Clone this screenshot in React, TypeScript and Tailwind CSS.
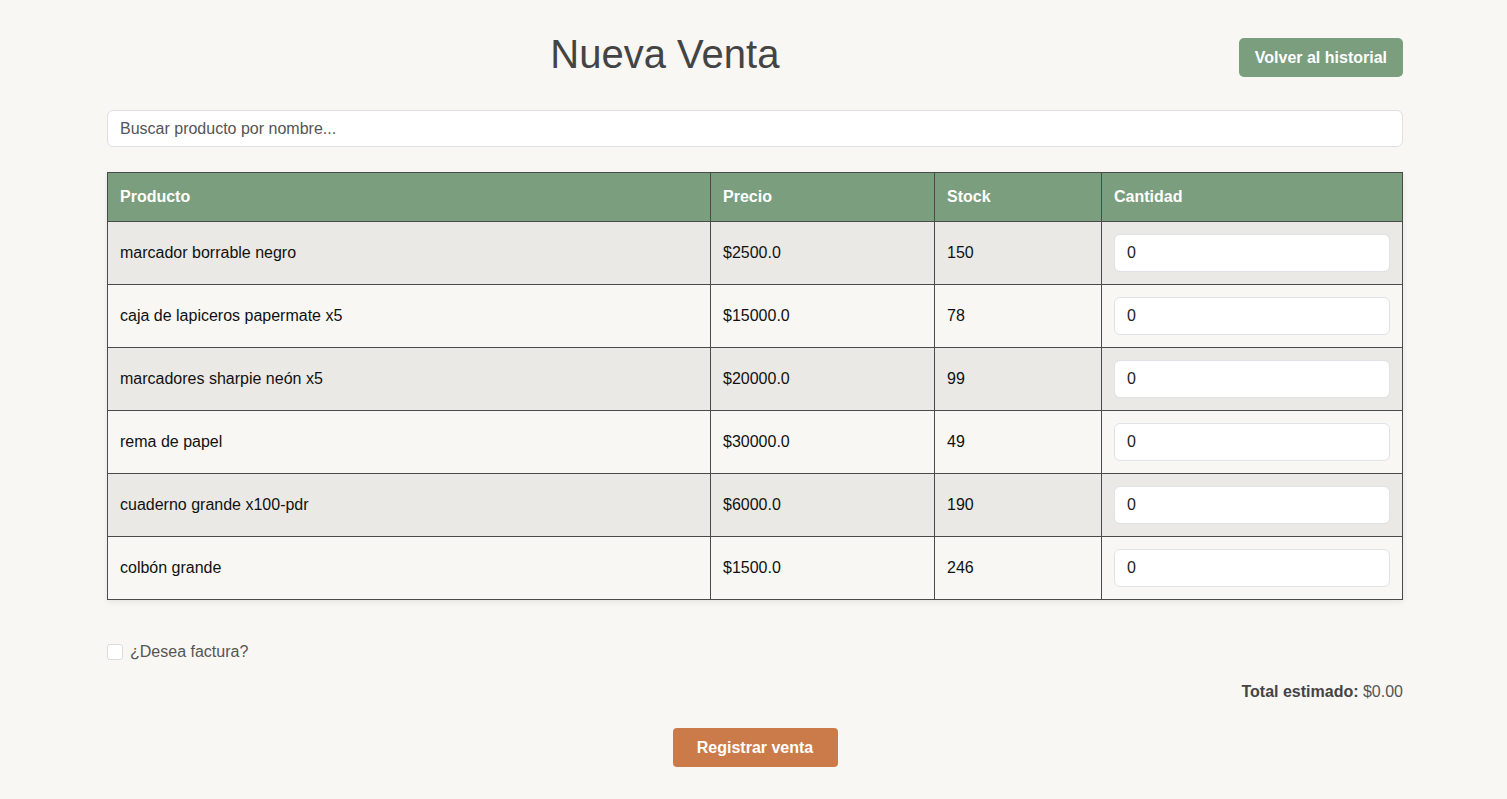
import { useState } from 'react';

interface Producto {
  nombre: string;
  precio: number;
  stock: number;
}

const productos: Producto[] = [
  { nombre: 'marcador borrable negro', precio: 2500, stock: 150 },
  { nombre: 'caja de lapiceros papermate x5', precio: 15000, stock: 78 },
  { nombre: 'marcadores sharpie neón x5', precio: 20000, stock: 99 },
  { nombre: 'rema de papel', precio: 30000, stock: 49 },
  { nombre: 'cuaderno grande x100-pdr', precio: 6000, stock: 190 },
  { nombre: 'colbón grande', precio: 1500, stock: 246 },
];

export default function App() {
  const [busqueda, setBusqueda] = useState('');
  const [cantidades, setCantidades] = useState<number[]>(productos.map(() => 0));
  const [factura, setFactura] = useState(false);

  const filtrados = productos.filter((p) =>
    p.nombre.toLowerCase().includes(busqueda.toLowerCase())
  );

  const total = productos.reduce((acc, p, i) => acc + p.precio * (cantidades[i] || 0), 0);

  return (
    <div
      className="min-h-screen bg-[#f8f7f4] text-[#111]"
      style={{ fontFamily: '"Liberation Sans", Arial, sans-serif' }}
    >
      <div className="ml-[107px] w-[1296px] pt-[30px] pb-8">
        {/* Header */}
        <div className="flex items-start gap-4">
          <h1 className="flex-1 text-center text-[40px] leading-[48px] font-normal text-[#444]">
            Nueva Venta
          </h1>
          <button className="mt-[8px] h-[39px] rounded-[5px] bg-[#7a9e7e] px-4 text-[16px] font-bold text-white">
            Volver al historial
          </button>
        </div>

        {/* Search */}
        <input
          type="text"
          value={busqueda}
          onChange={(e) => setBusqueda(e.target.value)}
          placeholder="Buscar producto por nombre..."
          className="mt-8 block h-[37px] w-full rounded-[6px] border border-[#e0e0e4] bg-white px-3 text-[16px] text-[#333] placeholder:text-[#555] outline-none"
        />

        {/* Table */}
        <table className="mt-[25px] w-full border-collapse border border-[#4a4a4a] text-[16px] shadow-[0_2px_6px_rgba(0,0,0,0.08)]">
          <thead>
            <tr className="bg-[#7a9e7e] text-white">
              <th className="w-[603px] border border-[#4a4a4a] px-3 py-[15px] text-left font-bold leading-[18px]">Producto</th>
              <th className="w-[224px] border border-[#4a4a4a] px-3 py-[15px] text-left font-bold leading-[18px]">Precio</th>
              <th className="w-[167px] border border-[#4a4a4a] px-3 py-[15px] text-left font-bold leading-[18px]">Stock</th>
              <th className="border border-[#4a4a4a] px-3 py-[15px] text-left font-bold leading-[18px]">Cantidad</th>
            </tr>
          </thead>
          <tbody>
            {filtrados.map((p) => {
              const idx = productos.indexOf(p);
              return (
                <tr key={p.nombre} className="odd:bg-[#ebe9e5] even:bg-[#f8f7f4]">
                  <td className="border border-[#4a4a4a] px-3 py-3">{p.nombre}</td>
                  <td className="border border-[#4a4a4a] px-3 py-3">${p.precio.toFixed(1)}</td>
                  <td className="border border-[#4a4a4a] px-3 py-3">{p.stock}</td>
                  <td className="border border-[#4a4a4a] px-3 py-3">
                    <input
                      type="number"
                      min={0}
                      value={cantidades[idx]}
                      onChange={(e) => {
                        const v = [...cantidades];
                        v[idx] = Number(e.target.value);
                        setCantidades(v);
                      }}
                      className="block h-[38px] w-full rounded-[6px] border border-[#dfe2e6] bg-white px-3 text-[16px] text-[#222] outline-none [appearance:textfield] [&::-webkit-inner-spin-button]:appearance-none"
                    />
                  </td>
                </tr>
              );
            })}
          </tbody>
        </table>

        {/* Factura */}
        <label className="mt-[43px] flex h-[18px] items-center gap-2 text-[16px] text-[#555]">
          <input
            type="checkbox"
            checked={factura}
            onChange={(e) => setFactura(e.target.checked)}
            className="h-4 w-4 appearance-none rounded-[3px] border border-[#dcdcdc] bg-white"
          />
          <span className="ml-[-1px]">¿Desea factura?</span>
        </label>

        {/* Total */}
        <div className="mt-[22px] text-right text-[16px] leading-[18px] text-[#555]">
          <span className="font-bold text-[#444]">Total estimado:</span> ${total.toFixed(2)}
        </div>

        {/* Submit */}
        <div className="mt-[27px] flex justify-center">
          <button className="h-[39px] w-[165px] rounded-[4px] bg-[#cb7b4a] text-[16px] font-bold text-white">
            Registrar venta
          </button>
        </div>
      </div>
    </div>
  );
}
